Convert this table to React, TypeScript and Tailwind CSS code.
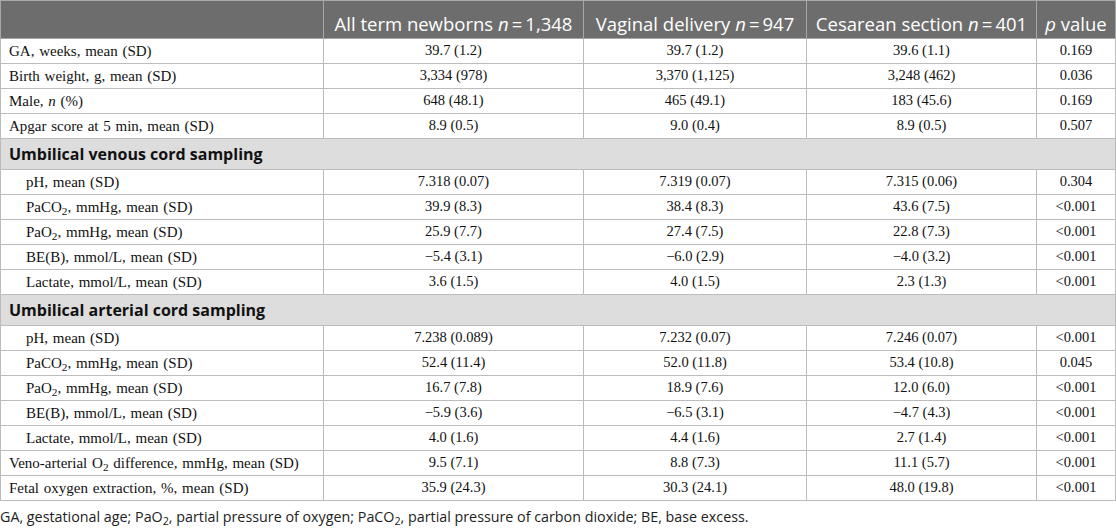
import type { ReactNode } from 'react';

type Row = {
  label: ReactNode;
  all: string;
  vag: string;
  ces: string;
  p: string;
  indent?: boolean;
};

type Section = { title?: string; rows: Row[] };

const SECTIONS: Section[] = [
  {
    rows: [
      { label: 'GA, weeks, mean (SD)', all: '39.7 (1.2)', vag: '39.7 (1.2)', ces: '39.6 (1.1)', p: '0.169' },
      { label: 'Birth weight, g, mean (SD)', all: '3,334 (978)', vag: '3,370 (1,125)', ces: '3,248 (462)', p: '0.036' },
      { label: <>Male, <i>n</i> (%)</>, all: '648 (48.1)', vag: '465 (49.1)', ces: '183 (45.6)', p: '0.169' },
      { label: 'Apgar score at 5 min, mean (SD)', all: '8.9 (0.5)', vag: '9.0 (0.4)', ces: '8.9 (0.5)', p: '0.507' },
    ],
  },
  {
    title: 'Umbilical venous cord sampling',
    rows: [
      { indent: true, label: 'pH, mean (SD)', all: '7.318 (0.07)', vag: '7.319 (0.07)', ces: '7.315 (0.06)', p: '0.304' },
      { indent: true, label: <>PaCO<sub>2</sub>, mmHg, mean (SD)</>, all: '39.9 (8.3)', vag: '38.4 (8.3)', ces: '43.6 (7.5)', p: '<0.001' },
      { indent: true, label: <>PaO<sub>2</sub>, mmHg, mean (SD)</>, all: '25.9 (7.7)', vag: '27.4 (7.5)', ces: '22.8 (7.3)', p: '<0.001' },
      { indent: true, label: 'BE(B), mmol/L, mean (SD)', all: '\u22125.4 (3.1)', vag: '\u22126.0 (2.9)', ces: '\u22124.0 (3.2)', p: '<0.001' },
      { indent: true, label: 'Lactate, mmol/L, mean (SD)', all: '3.6 (1.5)', vag: '4.0 (1.5)', ces: '2.3 (1.3)', p: '<0.001' },
    ],
  },
  {
    title: 'Umbilical arterial cord sampling',
    rows: [
      { indent: true, label: 'pH, mean (SD)', all: '7.238 (0.089)', vag: '7.232 (0.07)', ces: '7.246 (0.07)', p: '<0.001' },
      { indent: true, label: <>PaCO<sub>2</sub>, mmHg, mean (SD)</>, all: '52.4 (11.4)', vag: '52.0 (11.8)', ces: '53.4 (10.8)', p: '0.045' },
      { indent: true, label: <>PaO<sub>2</sub>, mmHg, mean (SD)</>, all: '16.7 (7.8)', vag: '18.9 (7.6)', ces: '12.0 (6.0)', p: '<0.001' },
      { indent: true, label: 'BE(B), mmol/L, mean (SD)', all: '\u22125.9 (3.6)', vag: '\u22126.5 (3.1)', ces: '\u22124.7 (4.3)', p: '<0.001' },
      { indent: true, label: 'Lactate, mmol/L, mean (SD)', all: '4.0 (1.6)', vag: '4.4 (1.6)', ces: '2.7 (1.4)', p: '<0.001' },
      { label: <>Veno-arterial O<sub>2</sub> difference, mmHg, mean (SD)</>, all: '9.5 (7.1)', vag: '8.8 (7.3)', ces: '11.1 (5.7)', p: '<0.001' },
      { label: 'Fetal oxygen extraction, %, mean (SD)', all: '35.9 (24.3)', vag: '30.3 (24.1)', ces: '48.0 (19.8)', p: '<0.001' },
    ],
  },
];

const th = 'border border-[#a8a8a8] px-[5px] pb-[2px] pt-0 align-bottom font-normal text-white text-[18.5px] leading-[24px] whitespace-nowrap';
const td = 'border border-[#bcbcbc] px-2 py-0 text-center text-[14.5px]';

export default function App() {
  return (
    <div className="w-[1116px] h-[528px] bg-white overflow-hidden font-['Liberation_Serif',serif] text-[#111]">
      <table className="w-[1116px] table-fixed border-collapse">
        <colgroup>
          <col className="w-[323px]" />
          <col className="w-[260px]" />
          <col className="w-[223px]" />
          <col className="w-[230px]" />
          <col />
        </colgroup>
        <thead>
          <tr className="h-[38px] bg-[#6d6d6d] font-['Open_Sans',sans-serif]">
            <th className={th}></th>
            <th className={th}>All term newborns <i>n</i>&thinsp;=&thinsp;1,348</th>
            <th className={th}>Vaginal delivery <i>n</i>&thinsp;=&thinsp;947</th>
            <th className={th}>Cesarean section <i>n</i>&thinsp;=&thinsp;401</th>
            <th className={th}><i>p</i> value</th>
          </tr>
        </thead>
        <tbody>
          {SECTIONS.map((section, si) => (
            <SectionRows key={si} section={section} />
          ))}
        </tbody>
      </table>
      <p className="mt-[7px] font-['Open_Sans',sans-serif] text-[14.3px] leading-[18px] text-[#222]">
        GA, gestational age; PaO<sub>2</sub>, partial pressure of oxygen; PaCO<sub>2</sub>, partial pressure of carbon
        dioxide; BE, base excess.
      </p>
    </div>
  );
}

function SectionRows({ section }: { section: Section }) {
  return (
    <>
      {section.title && (
        <tr className="h-[31px] bg-[#dddddd]">
          <td
            colSpan={5}
            className="border border-[#bcbcbc] px-2 py-0 font-['Open_Sans',sans-serif] font-bold text-[16px] text-[#111]"
          >
            {section.title}
          </td>
        </tr>
      )}
      {section.rows.map((r, i) => (
        <tr key={i} className="h-[25px]">
          <td
            className={`border border-[#bcbcbc] py-0 pr-2 text-left text-[15px] [word-spacing:1px] ${
              r.indent ? 'pl-[25px]' : 'pl-2'
            }`}
          >
            {r.label}
          </td>
          <td className={td}>{r.all}</td>
          <td className={td}>{r.vag}</td>
          <td className={td}>{r.ces}</td>
          <td className={td}>{r.p}</td>
        </tr>
      ))}
    </>
  );
}
